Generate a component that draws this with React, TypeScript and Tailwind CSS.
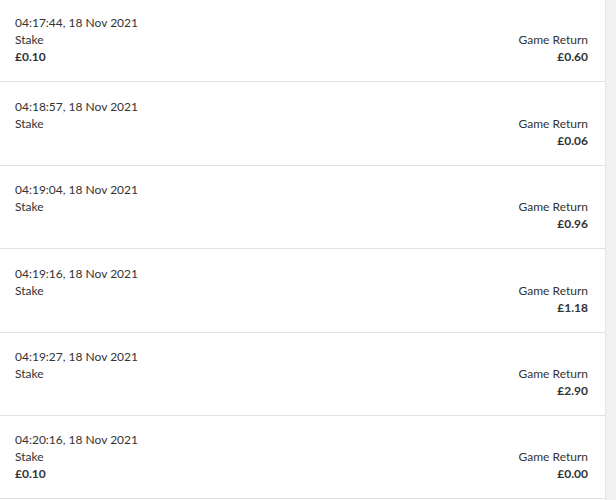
const rows = [
  { time: '04:17:44, 18 Nov 2021', stake: '£0.10', ret: '£0.60' },
  { time: '04:18:57, 18 Nov 2021', stake: '', ret: '£0.06' },
  { time: '04:19:04, 18 Nov 2021', stake: '', ret: '£0.96' },
  { time: '04:19:16, 18 Nov 2021', stake: '', ret: '£1.18' },
  { time: '04:19:27, 18 Nov 2021', stake: '', ret: '£2.90' },
  { time: '04:20:16, 18 Nov 2021', stake: '£0.10', ret: '£0.00' },
];

export default function App() {
  return (
    <div className="flex h-[500px] w-[616px] overflow-hidden bg-white font-['Lato',sans-serif] text-[12px] leading-[17px] text-[#333]">
      <div className="flex-1">
        {rows.map((r) => (
          <div key={r.time} className="flex justify-between border-b border-[#e0e0e0] pl-[15px] pr-[17px] pt-[15.4px] pb-[16px] first:pt-[14.4px]">
            <div className="flex flex-col">
              <span>{r.time}</span>
              <span>Stake</span>
              <span className="h-[17px] font-bold">{r.stake}</span>
            </div>
            <div className="flex flex-col items-end justify-end">
              <span>Game Return</span>
              <span className="font-bold">{r.ret}</span>
            </div>
          </div>
        ))}
      </div>
      <div className="w-[11px] shrink-0 border-l border-[#e6e6e6] bg-[#f1f1f1]" />
    </div>
  );
}
